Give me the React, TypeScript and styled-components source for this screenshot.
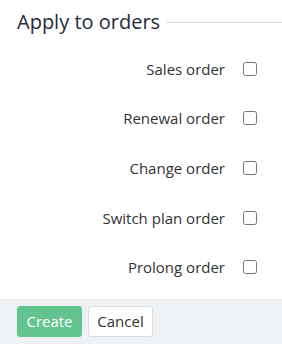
import React from "react";
import styled, { createGlobalStyle } from "styled-components";

const Global = createGlobalStyle`
  html, body { margin: 0; padding: 0; background: #fff; }
  body { font-family: "Open Sans", "Liberation Sans", sans-serif; }
  * { box-sizing: border-box; }
`;

const Panel = styled.div`
  width: 282px;
  height: 346px;
  display: flex;
  flex-direction: column;
  background: #fff;
`;

const Legend = styled.div`
  display: flex;
  align-items: center;
  gap: 6px;
  padding: 8px 0 0 17px;
  height: 36px;
`;

const Title = styled.h2`
  margin: 0;
  font-size: 20px;
  font-weight: 400;
  line-height: 26px;
  color: #1e2b3c;
  white-space: nowrap;
`;

const Rule = styled.div`
  flex: 1;
  height: 1px;
  background: #d5dde5;
`;

const List = styled.div`
  display: flex;
  flex-direction: column;
  padding-top: 8px;
`;

const Row = styled.label`
  display: grid;
  grid-template-columns: 225px 14px;
  column-gap: 18px;
  align-items: center;
  height: 49.6px;
`;

const Label = styled.span`
  text-align: right;
  font-size: 15px;
  color: #333;
`;

const Box = styled.input`
  margin: 0;
  width: 14px;
  height: 14px;
`;

const Footer = styled.div`
  margin-top: 7px;
  background: #eff2f5;
  height: 45px;
  display: flex;
  align-items: flex-start;
  gap: 6px;
  padding: 7px 17px 0;
`;

const Button = styled.button<{ $primary?: boolean }>`
  height: 31px;
  width: 65px;
  border-radius: 3px;
  font-family: "Open Sans", "Liberation Sans", sans-serif;
  font-size: 15px;
  padding: 0;
  border: 1px solid ${(p) => (p.$primary ? "#64c48f" : "#d5dde5")};
  background: ${(p) => (p.$primary ? "#64c48f" : "#fff")};
  color: ${(p) => (p.$primary ? "#fff" : "#333")};
`;

const items = ["Sales order", "Renewal order", "Change order", "Switch plan order", "Prolong order"];

export default function App() {
  return (
    <Panel>
      <Global />
      <Legend>
        <Title>Apply to orders</Title>
        <Rule />
      </Legend>
      <List>
        {items.map((t) => (
          <Row key={t}>
            <Label>{t}</Label>
            <Box type="checkbox" />
          </Row>
        ))}
      </List>
      <Footer>
        <Button $primary>Create</Button>
        <Button>Cancel</Button>
      </Footer>
    </Panel>
  );
}
